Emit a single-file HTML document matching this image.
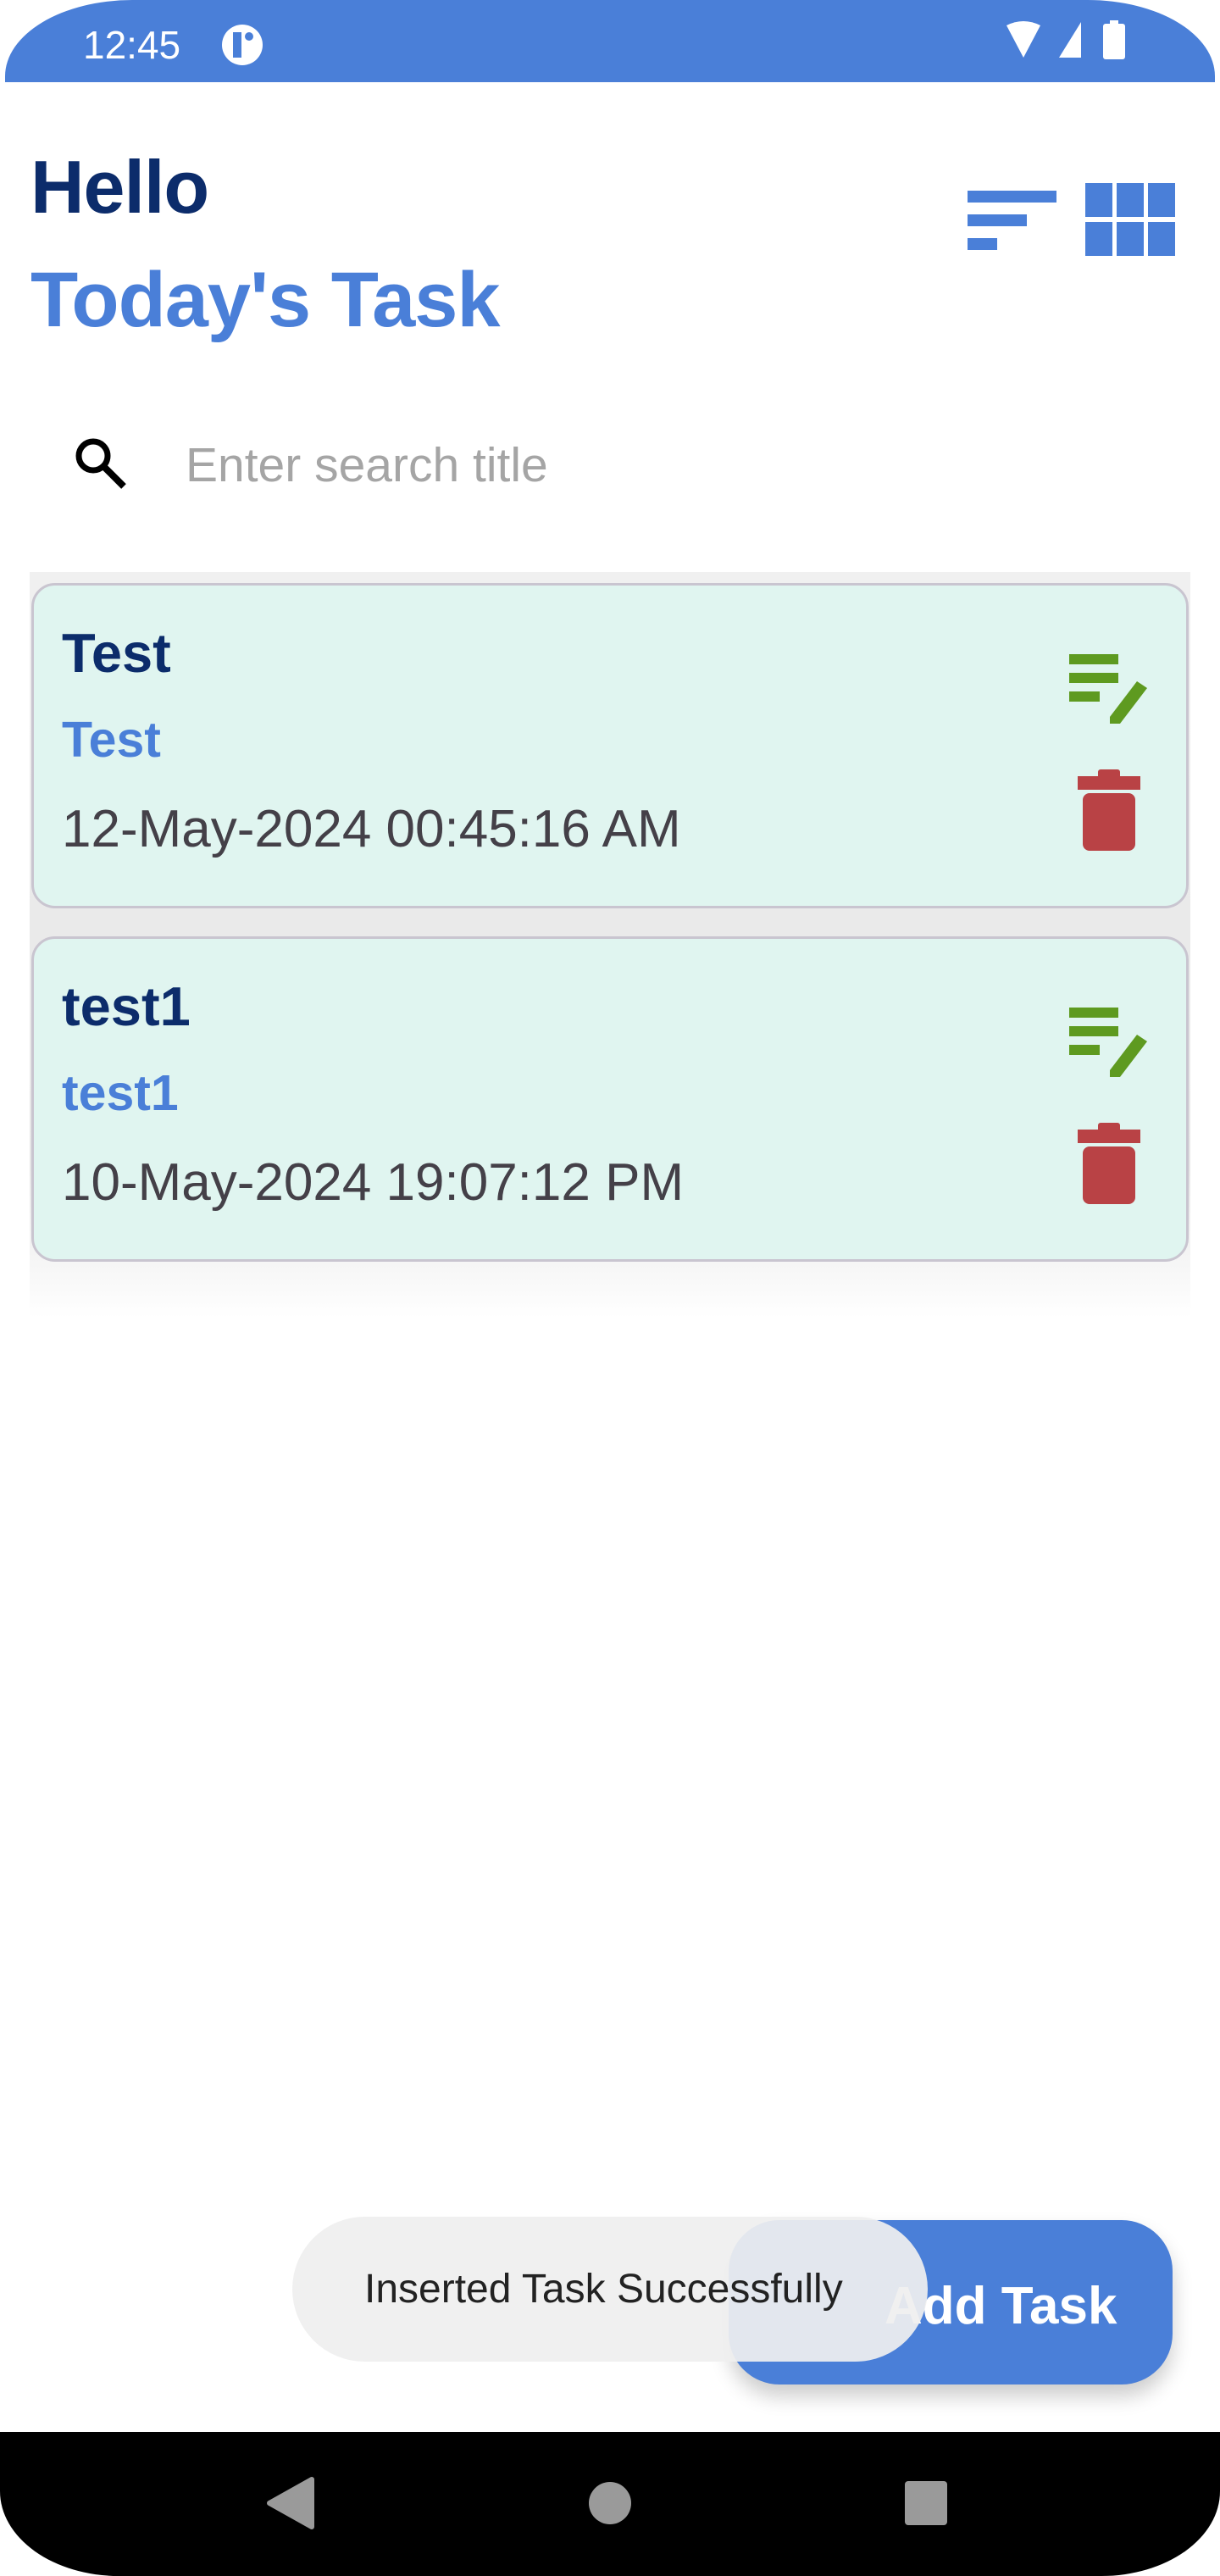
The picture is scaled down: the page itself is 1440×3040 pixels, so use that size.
<!DOCTYPE html>
<html><head><meta charset="utf-8"><style>
*{margin:0;padding:0;box-sizing:border-box}
body{width:1440px;height:3040px;background:#fff;position:relative;overflow:hidden;font-family:"Liberation Sans",sans-serif}
.abs{position:absolute}
.status{left:6px;top:0;width:1428px;height:97px;background:#4a7fd8;border-radius:150px 150px 0 0/90px 90px 0 0}
.card{position:absolute;left:37px;width:1366px;height:384px;background:#e0f5f0;border:3px solid #c9c5d0;border-radius:28px}
.t1{position:absolute;left:33px;top:42px;font-size:65px;font-weight:bold;color:#0c2c6b}
.t2{position:absolute;left:33px;top:148px;font-size:59px;font-weight:bold;color:#4a7fd8}
.t3{position:absolute;left:33px;top:252px;font-size:62px;color:#444048}
</style></head><body>
<div class="abs status"></div>
<div class="abs" style="left:98px;top:26px;font-size:46px;color:#fff">12:45</div>
<div class="abs" style="left:262px;top:29px;width:48px;height:48px;border-radius:50%;background:#fff"></div>
<div class="abs" style="left:275px;top:38px;width:10px;height:30px;background:#4a7fd8"></div>
<div class="abs" style="left:289px;top:38px;width:10px;height:10px;border-radius:50%;background:#4a7fd8"></div>
<svg class="abs" style="left:1180px;top:24px" width="170" height="50"><path d="M8 6 Q28 -4 48 6 L28 44Z" fill="#fff"/><path d="M70 44 L96 2 V44Z" fill="#fff"/><rect x="122" y="4" width="26" height="42" rx="3" fill="#fff"/><rect x="130" y="0" width="10" height="6" fill="#fff"/></svg>
<div class="abs" style="left:36px;top:170px;font-size:88px;font-weight:bold;color:#0c2c6b;letter-spacing:-1px">Hello</div>
<div class="abs" style="left:36px;top:302px;font-size:92px;font-weight:bold;color:#4a7fd8;letter-spacing:-1px">Today's Task</div>
<svg class="abs" style="left:1142px;top:223px" width="106" height="74"><rect x="0" y="2" width="105" height="14" fill="#4a7fd8"/><rect x="0" y="30" width="70" height="14" fill="#4a7fd8"/><rect x="0" y="58" width="35" height="14" fill="#4a7fd8"/></svg>
<svg class="abs" style="left:1281px;top:216px" width="108" height="86"><g fill="#4a7fd8"><rect x="0" y="0" width="32" height="40"/><rect x="37" y="0" width="32" height="40"/><rect x="74" y="0" width="32" height="40"/><rect x="0" y="46" width="32" height="40"/><rect x="37" y="46" width="32" height="40"/><rect x="74" y="46" width="32" height="40"/></g></svg>
<svg class="abs" style="left:86px;top:514px" width="66" height="66"><circle cx="24" cy="24" r="17" fill="none" stroke="#000" stroke-width="7"/><path d="M36 36 L60 60" stroke="#000" stroke-width="8"/></svg>
<div class="abs" style="left:219px;top:516px;font-size:57px;color:#a5a5a5">Enter search title</div>
<div class="abs" style="left:35px;top:675px;width:1370px;height:880px;background:linear-gradient(#f0f0f0,#e6e6e6 80%,#fff)"></div>
<div class="card" style="top:688px"><div class="t1">Test</div><div class="t2">Test</div><div class="t3">12-May-2024 00:45:16 AM</div></div>
<div class="card" style="top:1105px"><div class="t1">test1</div><div class="t2">test1</div><div class="t3">10-May-2024 19:07:12 PM</div></div>
<svg class="abs" style="left:1262px;top:770px" width="96" height="86"><g fill="#5e9a20"><rect x="0" y="2" width="58" height="12"/><rect x="0" y="24" width="58" height="12"/><rect x="0" y="46" width="36" height="12"/><path d="M48 76 L80 34 L92 42 L60 84 L48 84Z"/></g></svg>
<svg class="abs" style="left:1272px;top:908px" width="76" height="98"><g fill="#b94245"><rect x="0" y="8" width="74" height="16"/><rect x="24" y="0" width="26" height="12" rx="3"/><rect x="6" y="28" width="62" height="68" rx="8"/></g></svg>
<svg class="abs" style="left:1262px;top:1187px" width="96" height="86"><g fill="#5e9a20"><rect x="0" y="2" width="58" height="12"/><rect x="0" y="24" width="58" height="12"/><rect x="0" y="46" width="36" height="12"/><path d="M48 76 L80 34 L92 42 L60 84 L48 84Z"/></g></svg>
<svg class="abs" style="left:1272px;top:1325px" width="76" height="98"><g fill="#b94245"><rect x="0" y="8" width="74" height="16"/><rect x="24" y="0" width="26" height="12" rx="3"/><rect x="6" y="28" width="62" height="68" rx="8"/></g></svg>
<div class="abs" style="left:860px;top:2620px;width:524px;height:194px;background:#4a7fd8;border-radius:60px;box-shadow:0 14px 24px rgba(0,0,0,.2)"></div>
<div class="abs" style="left:1044px;top:2686px;font-size:62px;font-weight:bold;color:#fff">Add Task</div>
<div class="abs" style="left:345px;top:2616px;width:750px;height:171px;background:rgba(239,239,239,.93);border-radius:86px"></div>
<div class="abs" style="left:430px;top:2674px;font-size:48px;color:#222">Inserted Task Successfully</div>
<div class="abs" style="left:0;top:2870px;width:1440px;height:170px;background:#000;border-radius:0 0 140px 140px/0 0 100px 100px"></div>
<svg class="abs" style="left:310px;top:2920px" width="820" height="70"><path d="M8 34 L58 6 V62Z" fill="#9a9a9a" stroke="#9a9a9a" stroke-width="6" stroke-linejoin="round"/><circle cx="410" cy="34" r="25" fill="#9a9a9a"/><rect x="758" y="8" width="50" height="52" rx="4" fill="#9a9a9a"/></svg>
</body></html>
